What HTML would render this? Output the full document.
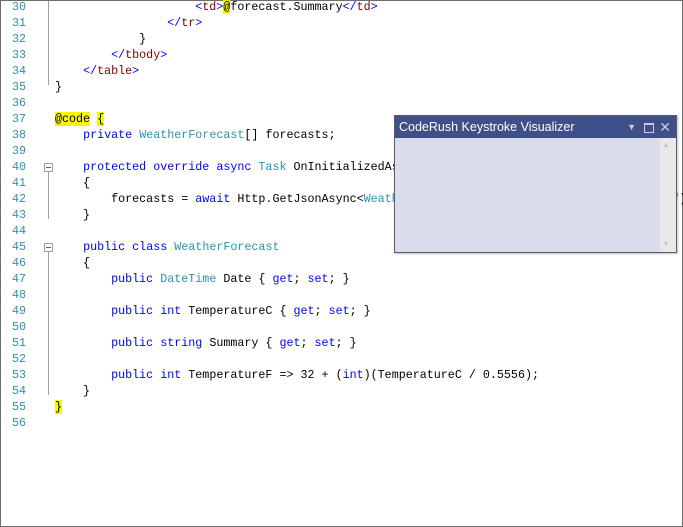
<!DOCTYPE html>
<html><head><meta charset="utf-8"><style>
html,body{margin:0;padding:0}
body{width:681px;height:525px;border:1px solid #6d6d6d;background:#fff;position:relative;overflow:hidden;font-family:"Liberation Mono",monospace;font-size:11.7px}
.ln{position:absolute;left:0;width:25px;text-align:right;color:#2b91af;height:16px;line-height:16px}
.c{position:absolute;left:54px;white-space:pre;height:16px;line-height:16px;color:#000}
.k{color:#0000ff}.t{color:#2b91af}.h{color:#800000}.b{color:#0000ff}
.y{background:#f7f700}
.fold{position:absolute;left:43px;width:7px;height:7px;border:1px solid #a0a0a0;background:#fff}
.fold:after{content:"";position:absolute;left:1px;top:3px;width:5px;height:1px;background:#666}
.vl{position:absolute;left:47px;width:1px;background:#a0a0a0}
.win{position:absolute;left:393px;top:114px;width:281px;height:136px;border:1px solid #5b5b6b;background:#d9dcea;box-shadow:1px 1px 2px rgba(0,0,0,.25)}
.tb{height:22px;background:#3f5089;color:#fff;font-family:"Liberation Sans",sans-serif;font-size:12.5px;line-height:22px;padding-left:4px;position:relative}
.sb{position:absolute;right:0;top:22px;width:16px;bottom:0;background:#e8e8ec}
</style></head><body>
<div class="ln" style="top:-2px">30</div><div class="ln" style="top:14px">31</div><div class="ln" style="top:30px">32</div><div class="ln" style="top:46px">33</div><div class="ln" style="top:62px">34</div><div class="ln" style="top:78px">35</div><div class="ln" style="top:94px">36</div><div class="ln" style="top:110px">37</div><div class="ln" style="top:126px">38</div><div class="ln" style="top:142px">39</div><div class="ln" style="top:158px">40</div><div class="ln" style="top:174px">41</div><div class="ln" style="top:190px">42</div><div class="ln" style="top:206px">43</div><div class="ln" style="top:222px">44</div><div class="ln" style="top:238px">45</div><div class="ln" style="top:254px">46</div><div class="ln" style="top:270px">47</div><div class="ln" style="top:286px">48</div><div class="ln" style="top:302px">49</div><div class="ln" style="top:318px">50</div><div class="ln" style="top:334px">51</div><div class="ln" style="top:350px">52</div><div class="ln" style="top:366px">53</div><div class="ln" style="top:382px">54</div><div class="ln" style="top:398px">55</div><div class="ln" style="top:414px">56</div>

<div class="vl" style="top:0;height:84px"></div>
<div class="vl" style="top:168px;height:50px"></div>
<div class="vl" style="top:248px;height:146px"></div>
<div class="fold" style="top:162px"></div>
<div class="fold" style="top:242px"></div>

<div class="c" style="top:-2px">                    <span class="b">&lt;</span><span class="h">td</span><span class="b">&gt;</span><span class="y">@</span>forecast.Summary<span class="b">&lt;/</span><span class="h">td</span><span class="b">&gt;</span></div>
<div class="c" style="top:14px">                <span class="b">&lt;/</span><span class="h">tr</span><span class="b">&gt;</span></div>
<div class="c" style="top:30px">            }</div>
<div class="c" style="top:46px">        <span class="b">&lt;/</span><span class="h">tbody</span><span class="b">&gt;</span></div>
<div class="c" style="top:62px">    <span class="b">&lt;/</span><span class="h">table</span><span class="b">&gt;</span></div>
<div class="c" style="top:78px">}</div>
<div class="c" style="top:110px"><span class="y">@code</span> <span class="y">{</span></div>
<div class="c" style="top:126px">    <span class="k">private</span> <span class="t">WeatherForecast</span>[] forecasts;</div>
<div class="c" style="top:158px">    <span class="k">protected</span> <span class="k">override</span> <span class="k">async</span> <span class="t">Task</span> OnInitializedAsync()</div>
<div class="c" style="top:174px">    {</div>
<div class="c" style="top:190px">        forecasts = <span class="k">await</span> Http.GetJsonAsync&lt;<span class="t">WeatherForecast</span>[]&gt;(<span style="color:#a31515">"sample-data/weather.json"</span>);</div>
<div class="c" style="top:206px">    }</div>
<div class="c" style="top:238px">    <span class="k">public</span> <span class="k">class</span> <span class="t">WeatherForecast</span></div>
<div class="c" style="top:254px">    {</div>
<div class="c" style="top:270px">        <span class="k">public</span> <span class="t">DateTime</span> Date { <span class="k">get</span>; <span class="k">set</span>; }</div>
<div class="c" style="top:302px">        <span class="k">public</span> <span class="k">int</span> TemperatureC { <span class="k">get</span>; <span class="k">set</span>; }</div>
<div class="c" style="top:334px">        <span class="k">public</span> <span class="k">string</span> Summary { <span class="k">get</span>; <span class="k">set</span>; }</div>
<div class="c" style="top:366px">        <span class="k">public</span> <span class="k">int</span> TemperatureF =&gt; 32 + (<span class="k">int</span>)(TemperatureC / 0.5556);</div>
<div class="c" style="top:382px">    }</div>
<div class="c" style="top:398px"><span class="y">}</span></div>

<div class="win">
  <div class="tb">CodeRush Keystroke Visualizer
    <span style="position:absolute;right:40px;top:0;font-size:9px;color:#c8cde0">▼</span>
    <span style="position:absolute;right:22px;top:7px;width:8px;height:7px;border:1px solid #c8cde0;border-top-width:2px"></span>
    <span style="position:absolute;right:5px;top:0;font-size:14px;color:#c8cde0">✕</span>
  </div>
  <div class="sb">
    <span style="position:absolute;left:4px;top:4px;font-size:7px;color:#c0c0c8">▲</span>
    <span style="position:absolute;left:4px;bottom:3px;font-size:7px;color:#c0c0c8">▼</span>
  </div>
</div>
</body></html>
